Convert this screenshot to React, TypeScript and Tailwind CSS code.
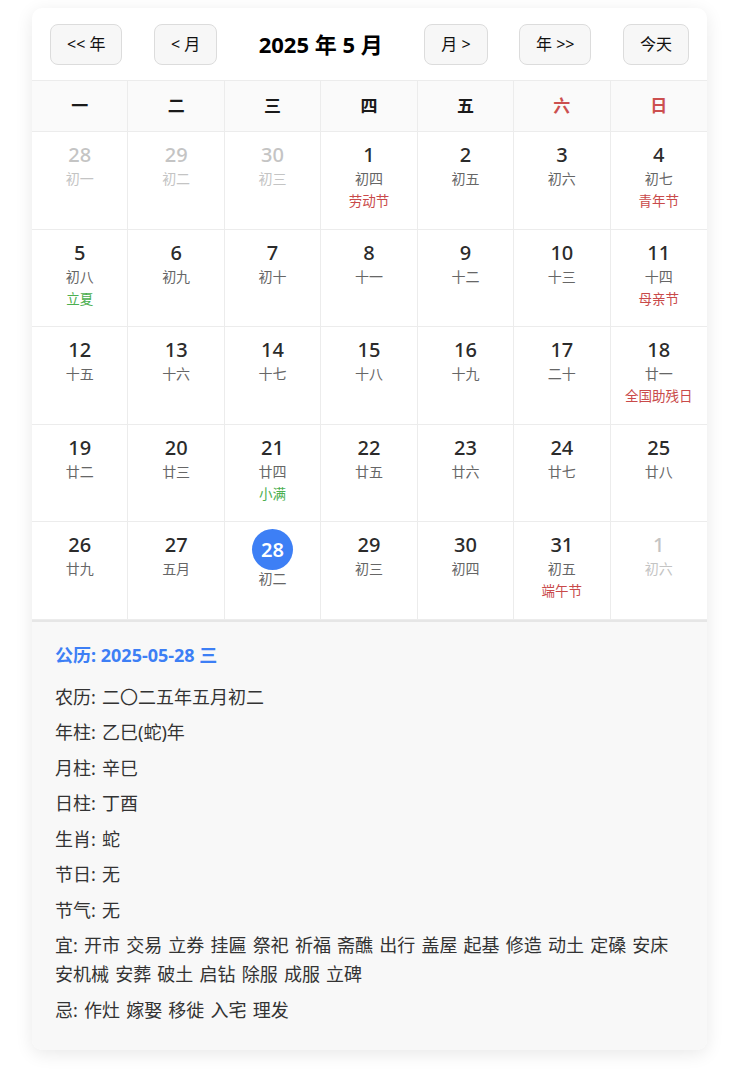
import React from 'react';

type Day = {
  d: number;
  lunar: string;
  fest?: string;
  term?: string;
  other?: boolean;
  selected?: boolean;
};

const days: Day[] = [
  { d: 28, lunar: '初一', other: true },
  { d: 29, lunar: '初二', other: true },
  { d: 30, lunar: '初三', other: true },
  { d: 1, lunar: '初四', fest: '劳动节' },
  { d: 2, lunar: '初五' },
  { d: 3, lunar: '初六' },
  { d: 4, lunar: '初七', fest: '青年节' },
  { d: 5, lunar: '初八', term: '立夏' },
  { d: 6, lunar: '初九' },
  { d: 7, lunar: '初十' },
  { d: 8, lunar: '十一' },
  { d: 9, lunar: '十二' },
  { d: 10, lunar: '十三' },
  { d: 11, lunar: '十四', fest: '母亲节' },
  { d: 12, lunar: '十五' },
  { d: 13, lunar: '十六' },
  { d: 14, lunar: '十七' },
  { d: 15, lunar: '十八' },
  { d: 16, lunar: '十九' },
  { d: 17, lunar: '二十' },
  { d: 18, lunar: '廿一', fest: '全国助残日' },
  { d: 19, lunar: '廿二' },
  { d: 20, lunar: '廿三' },
  { d: 21, lunar: '廿四', term: '小满' },
  { d: 22, lunar: '廿五' },
  { d: 23, lunar: '廿六' },
  { d: 24, lunar: '廿七' },
  { d: 25, lunar: '廿八' },
  { d: 26, lunar: '廿九' },
  { d: 27, lunar: '五月' },
  { d: 28, lunar: '初二', selected: true },
  { d: 29, lunar: '初三' },
  { d: 30, lunar: '初四' },
  { d: 31, lunar: '初五', fest: '端午节' },
  { d: 1, lunar: '初六', other: true },
];

const weekdays = ['一', '二', '三', '四', '五', '六', '日'];

const info = [
  '农历: 二〇二五年五月初二',
  '年柱: 乙巳(蛇)年',
  '月柱: 辛巳',
  '日柱: 丁酉',
  '生肖: 蛇',
  '节日: 无',
  '节气: 无',
  '宜: 开市 交易 立券 挂匾 祭祀 祈福 斋醮 出行 盖屋 起基 修造 动土 定磉 安床 安机械 安葬 破土 启钻 除服 成服 立碑',
  '忌: 作灶 嫁娶 移徙 入宅 理发',
];

const NavButton = ({ label }: { label: string }) => (
  <button className="h-[41px] px-[16px] rounded-[8px] border border-[#dcdcdc] bg-[#f7f7f7] text-[16px] text-[#111] leading-none">
    {label}
  </button>
);

const DayCell = ({ day, col }: { day: Day; col: number }) => {
  const last = col === 6;
  return (
    <div
      className={
        'h-[97.5px] border-b border-[#ececec] flex flex-col items-center pt-[9px] ' +
        (last ? '' : 'border-r')
      }
    >
      {day.selected ? (
        <div className="w-[41px] h-[41px] -mt-[2px] rounded-full bg-[#3d7ff5] text-white flex items-center justify-center text-[20px] font-semibold">
          {day.d}
        </div>
      ) : (
        <div
          className={
            'text-[20px] leading-[28px] font-medium ' +
            (day.other ? 'text-[#c4c4c4]' : 'text-[#2b2b2b]')
          }
        >
          {day.d}
        </div>
      )}
      <div
        className={
          'text-[14px] leading-[20px] ' +
          (day.selected ? '-mt-[1px] ' : 'mt-0 ') +
          (day.other ? 'text-[#c4c4c4]' : 'text-[#666]')
        }
      >
        {day.lunar}
      </div>
      {day.fest && <div className="mt-[1px] text-[13.5px] leading-[22px] text-[#c94a4a]">{day.fest}</div>}
      {day.term && <div className="mt-[1px] text-[13.5px] leading-[22px] text-[#4caf50]">{day.term}</div>}
    </div>
  );
};

export default function App() {
  return (
    <div
      className="min-h-screen bg-white pt-[8px]"
      style={{ fontFamily: '"Noto Sans", "Noto Sans CJK SC", sans-serif' }}
    >
      <div className="ml-[32px] w-[675px] rounded-[10px] overflow-hidden bg-white shadow-[0_4px_18px_rgba(0,0,0,0.09)]">
        <header className="h-[73px] px-[18px] flex items-center justify-between border-b border-[#ececec]">
          <NavButton label="<< 年" />
          <NavButton label="< 月" />
          <h1 className="px-[10px] text-[22px] font-bold text-black">2025 年 5 月</h1>
          <NavButton label="月 >" />
          <NavButton label="年 >>" />
          <NavButton label="今天" />
        </header>

        <div className="grid grid-cols-7 bg-[#fafafa]">
          {weekdays.map((w, i) => (
            <div
              key={w}
              className={
                'h-[51px] flex items-center justify-center text-[17px] font-bold border-b border-[#ececec] ' +
                (i === 6 ? '' : 'border-r ') +
                (i >= 5 ? 'text-[#cc4f4f]' : 'text-[#1a1a1a]')
              }
            >
              {w}
            </div>
          ))}
        </div>

        <div className="grid grid-cols-7">
          {days.map((day, i) => (
            <DayCell key={i} day={day} col={i % 7} />
          ))}
        </div>

        <section className="bg-[#f8f8f8] border-t-2 border-[#e6e6e6] px-[23px] pt-[19px] pb-[25px] text-[18px] text-[#333]">
          <h2 className="leading-[29px] font-bold text-[#3d7ff5] mb-[13px]">公历: 2025-05-28 三</h2>
          <div className="flex flex-col gap-[6.5px]">
            {info.map((line) => (
              <p key={line} className="leading-[29px] break-keep [word-spacing:1.5px]">
                {line}
              </p>
            ))}
          </div>
        </section>
      </div>
    </div>
  );
}
